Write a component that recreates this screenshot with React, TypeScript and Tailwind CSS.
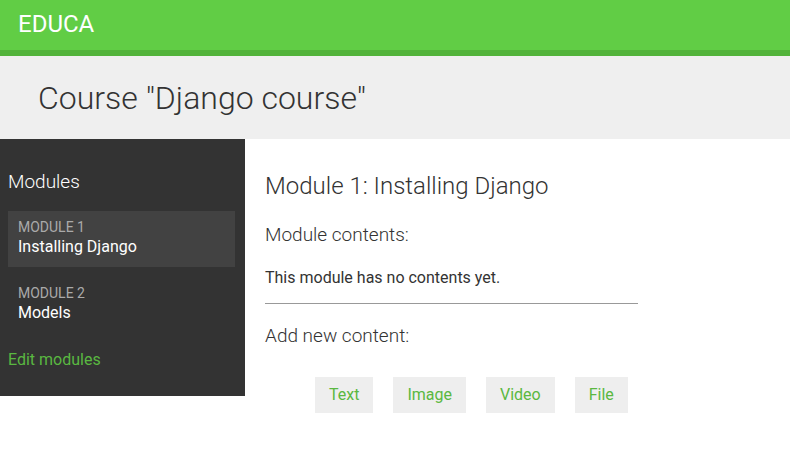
import React from "react";

// Course detail page: green top bar, grey title band, dark module sidebar and content area.

const modules = [
  { order: 1, title: "Installing Django", active: true },
  { order: 2, title: "Models", active: false },
];

const contentTypes = ["Text", "Image", "Video", "File"];

export default function App() {
  return (
    <div className="min-h-[461px] w-[790px] bg-white font-['Roboto',sans-serif]">
      {/* Top bar */}
      <header className="flex h-[56px] items-start border-b-[6px] border-[#52b33a] bg-[#61cd45] pl-[18px]">
        <span className="mt-[10px] text-[24px] leading-[28px] font-normal text-white">EDUCA</span>
      </header>

      {/* Title band */}
      <div className="flex h-[83px] items-center bg-[#efefef] pl-[38px]">
        <h1 className="text-[32px] leading-[40px] font-light text-[#333]">Course "Django course"</h1>
      </div>

      <div className="flex items-start">
        {/* Sidebar */}
        <aside className="h-[257px] w-[245px] bg-[#333333] px-[8px] pt-[31px] pr-[10px]">
          <h3 className="text-[19px] leading-[24px] font-light text-white">Modules</h3>
          <ul className="mt-[17px] flex flex-col gap-[10px]">
            {modules.map((m) => (
              <li
                key={m.order}
                className={
                  m.active
                    ? "h-[56px] bg-[#424242] px-[10px] pt-[8px]"
                    : "h-[56px] px-[10px] pt-[8px]"
                }
              >
                <div className="text-[14px] leading-[16px] font-normal text-[#aaaaaa]">MODULE {m.order}</div>
                <div className="mt-[1px] text-[16px] leading-[22px] font-normal text-white">{m.title}</div>
              </li>
            ))}
          </ul>
          <a className="mt-[17px] block text-[16px] leading-[20px] font-normal text-[#5ab841]">Edit modules</a>
        </aside>

        {/* Main content */}
        <main className="pl-[20px]">
          <h2 className="mt-[32px] text-[24px] leading-[30px] font-light text-[#333]">Module 1: Installing Django</h2>
          <h3 className="mt-[22px] text-[19px] leading-[24px] font-light text-[#333]">Module contents:</h3>
          <p className="mt-[21px] text-[16px] leading-[20px] font-normal text-[#333]">This module has no contents yet.</p>
          <div className="mt-[15px] h-px w-[373px] bg-[#999999]" />
          <h3 className="mt-[20px] text-[19px] leading-[24px] font-light text-[#333]">Add new content:</h3>
          <div className="mt-[29px] flex gap-[20px] pl-[50px]">
            {contentTypes.map((t) => (
              <a
                key={t}
                className="flex h-[36px] items-center bg-[#eeeeee] px-[14px] text-[16px] font-normal text-[#5ab841]"
              >
                {t}
              </a>
            ))}
          </div>
        </main>
      </div>
    </div>
  );
}
